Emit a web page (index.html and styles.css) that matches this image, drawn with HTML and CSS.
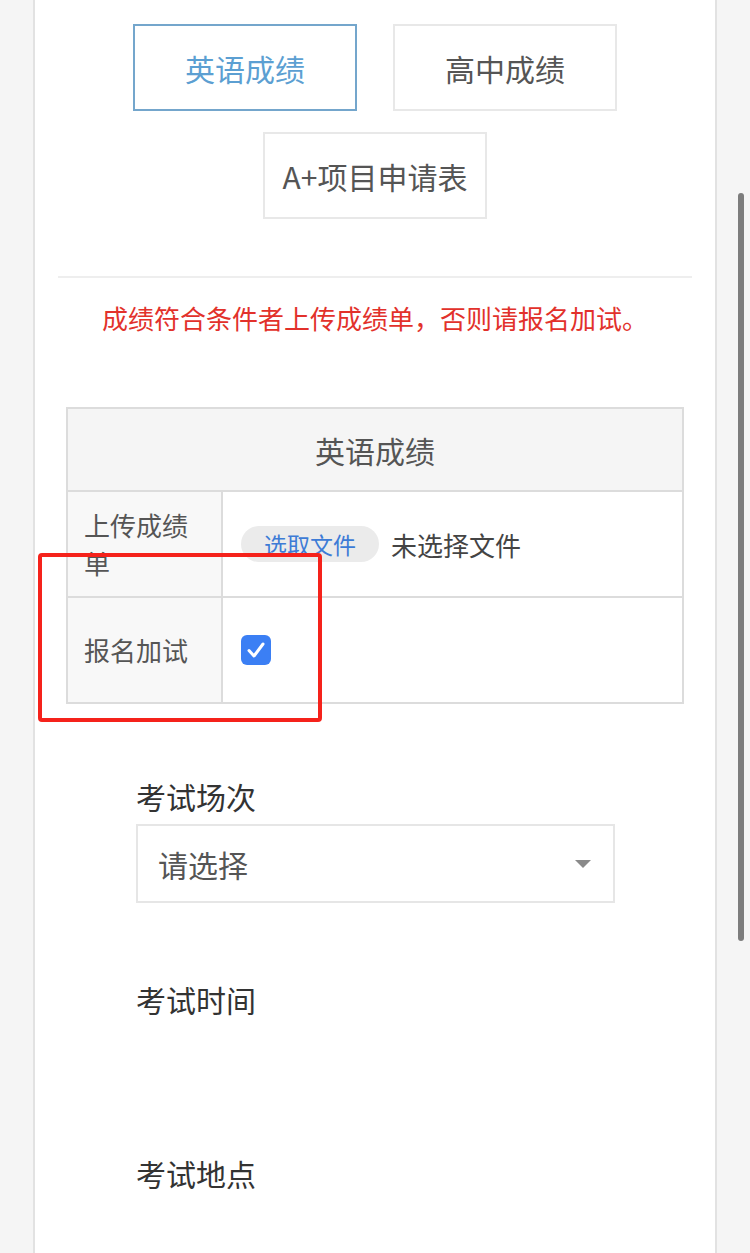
FILE: index.html
```html
<!DOCTYPE html>
<html lang="zh-CN">
<head>
    <meta charset="UTF-8">
    <meta name="viewport" content="width=device-width, initial-scale=1.0">
    <title>报名</title>
    <link rel="stylesheet" href="styles.css">
</head>
<body>
    <div class="panel">
        <div class="tabs">
            <div class="tab active">英语成绩</div>
            <div class="tab">高中成绩</div>
            <div class="tab">A+项目申请表</div>
        </div>
        <hr class="divider">
        <p class="notice">成绩符合条件者上传成绩单，否则请报名加试。</p>

        <table class="score-table">
            <tr>
                <th colspan="2">英语成绩</th>
            </tr>
            <tr>
                <td class="label-cell">上传成绩单</td>
                <td>
                    <div class="file-input">
                        <span class="file-btn">选取文件</span>
                        <span class="file-name">未选择文件</span>
                    </div>
                </td>
            </tr>
            <tr>
                <td class="label-cell">报名加试</td>
                <td>
                    <span class="checkbox">
                        <svg width="30" height="30" viewBox="0 0 30 30">
                            <path d="M8 15.5 L13 21 L22 9" fill="none" stroke="#fff" stroke-width="3" stroke-linecap="round" stroke-linejoin="round"/>
                        </svg>
                    </span>
                </td>
            </tr>
        </table>

        <div class="field">
            <div class="field-label">考试场次</div>
            <div class="select">
                <span>请选择</span>
                <span class="arrow"></span>
            </div>
        </div>
        <div class="field">
            <div class="field-label">考试时间</div>
        </div>
        <div class="field">
            <div class="field-label">考试地点</div>
        </div>

        <!-- annotation box -->
        <div class="highlight"></div>
    </div>
    <div class="scrollbar"></div>
</body>
</html>
```

FILE: styles.css
```css
body {
    font-family: "Noto Sans CJK SC", "Noto Sans", sans-serif;
    margin: 0;
    padding: 0;
    background-color: #f5f5f5;
    height: 1253px;
    overflow: hidden;
}

.panel {
    position: relative;
    width: 634px;
    height: 1253px;
    margin-left: 33px;
    padding: 24px 23px 0;
    background-color: #fff;
    border-left: 2px solid #e2e2e2;
    border-right: 2px solid #e2e2e2;
}

.tabs {
    display: flex;
    flex-wrap: wrap;
    justify-content: center;
    gap: 21px 36px;
}

.tab {
    width: 220px;
    height: 83px;
    border: 2px solid #e8e8e8;
    display: flex;
    align-items: center;
    justify-content: center;
    font-size: 30px;
    color: #555;
}

.tab.active {
    border-color: #74a6cc;
    color: #5c9fd2;
}

.divider {
    border: none;
    border-top: 2px solid #eeeeee;
    margin: 57px 0 0;
}

.notice {
    color: #e2312b;
    font-size: 26px;
    line-height: 36px;
    text-align: center;
    margin: 22px 0 0;
}

.score-table {
    width: 618px;
    margin: 71px auto 0;
    border-collapse: collapse;
    border: 2px solid #dcdcdc;
}

.score-table th {
    height: 81px;
    background-color: #f5f5f5;
    font-size: 30px;
    font-weight: normal;
    color: #555;
    border: 2px solid #dcdcdc;
    padding: 0;
}

.score-table td {
    height: 104px;
    border: 2px solid #dcdcdc;
    padding: 0 18px;
    vertical-align: middle;
}

.score-table .label-cell {
    width: 121px;
    padding: 0 16px;
    background-color: #f8f8f8;
    font-size: 26px;
    line-height: 38px;
    color: #555;
}

.file-input {
    display: flex;
    align-items: center;
    gap: 12px;
}

.file-btn {
    background-color: #ebebeb;
    border-radius: 18px;
    padding: 0 23px;
    height: 36px;
    line-height: 36px;
    font-size: 23px;
    color: #3d7bd6;
}

.file-name {
    font-size: 26px;
    color: #444;
}

.checkbox {
    display: block;
    width: 30px;
    height: 30px;
    border-radius: 6px;
    background-color: #3b7ff4;
}

.checkbox svg {
    display: block;
}

.field {
    padding-left: 78px;
    margin-top: 74px;
}

.field + .field {
    margin-top: 78px;
}

.field + .field + .field {
    margin-top: 138px;
}

.field-label {
    font-size: 30px;
    line-height: 36px;
    color: #333;
}

.select {
    width: 435px;
    height: 75px;
    margin-top: 10px;
    border: 2px solid #e6e6e6;
    padding: 0 20px;
    display: flex;
    align-items: center;
    justify-content: space-between;
    font-size: 30px;
    color: #555;
}

.select .arrow {
    width: 0;
    height: 0;
    border-left: 8px solid transparent;
    border-right: 8px solid transparent;
    border-top: 8px solid #8a8a8a;
    margin-right: 2px;
}

.highlight {
    position: absolute;
    left: 3px;
    top: 553px;
    width: 276px;
    height: 161px;
    border: 4px solid #f5221b;
    border-radius: 4px;
}

.scrollbar {
    position: absolute;
    left: 738px;
    top: 193px;
    width: 6px;
    height: 748px;
    border-radius: 3px;
    background-color: #7d7d7d;
}
```
